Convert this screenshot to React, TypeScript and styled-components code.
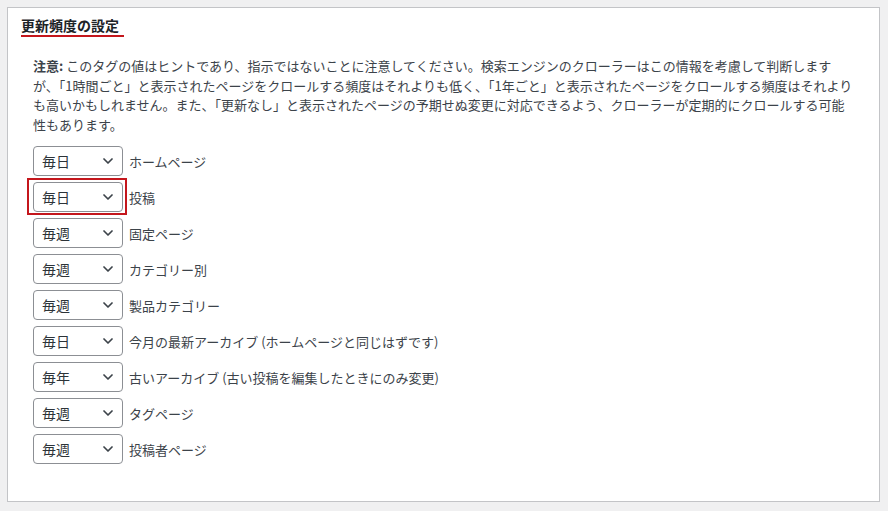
import React from 'react';
import styled, { createGlobalStyle } from 'styled-components';

const GlobalStyle = createGlobalStyle`
  html, body {
    margin: 0;
    padding: 0;
    background: #f0f0f1;
  }
  body {
    font-family: "Noto Sans CJK JP", "Noto Sans", sans-serif;
    color: #3c434a;
  }
`;

const Panel = styled.section`
  box-sizing: border-box;
  width: 873px;
  height: 495px;
  margin: 7px 0 0 7px;
  padding: 0 13px;
  background: #fff;
  border: 1px solid #c3c4c7;
`;

const Title = styled.h2`
  display: inline-block;
  margin: 8px 0 0;
  padding: 0 5px 0 0;
  font-size: 14px;
  line-height: 19px;
  font-weight: 700;
  color: #1d2327;
  border-bottom: 2px solid #c4161c;
`;

const Note = styled.p`
  width: 822px;
  margin: 19px 0 0 12px;
  font-size: 13px;
  line-height: 19.5px;
  color: #3c434a;

  strong {
    font-weight: 700;
  }
`;

const List = styled.div`
  display: flex;
  flex-direction: column;
  gap: 6px;
  margin: 12px 0 0 12px;
`;

const Row = styled.div`
  display: flex;
  align-items: center;
  gap: 6px;
`;

const SelectWrap = styled.span<{ $marked?: boolean }>`
  position: relative;
  display: inline-flex;

  &::after {
    content: '';
    display: ${p => (p.$marked ? 'block' : 'none')};
    position: absolute;
    left: -6px;
    right: -4px;
    top: -4px;
    bottom: -3px;
    border: 2px solid #c4161c;
    pointer-events: none;
  }
`;

const Select = styled.select`
  appearance: none;
  box-sizing: border-box;
  width: 90px;
  height: 30px;
  padding: 0 24px 0 8px;
  font-family: "Noto Sans CJK JP", sans-serif;
  font-size: 14px;
  color: #2c3338;
  background: #fff;
  border: 1px solid #8c8f94;
  border-radius: 4px;
  outline: none;
`;

const Chevron = styled.svg`
  position: absolute;
  right: 10px;
  top: 12px;
  pointer-events: none;
`;

const Label = styled.label`
  font-size: 13px;
  color: #3c434a;
`;

const rows: { value: string; label: string; marked?: boolean }[] = [
  { value: '毎日', label: 'ホームページ' },
  { value: '毎日', label: '投稿', marked: true },
  { value: '毎週', label: '固定ページ' },
  { value: '毎週', label: 'カテゴリー別' },
  { value: '毎週', label: '製品カテゴリー' },
  { value: '毎日', label: '今月の最新アーカイブ (ホームページと同じはずです)' },
  { value: '毎年', label: '古いアーカイブ (古い投稿を編集したときにのみ変更)' },
  { value: '毎週', label: 'タグページ' },
  { value: '毎週', label: '投稿者ページ' },
];

const options = ['常時', '1時間ごと', '毎日', '毎週', '毎月', '毎年', '更新なし'];

function App() {
  return (
    <>
      <GlobalStyle />
      <Panel>
        <Title>更新頻度の設定</Title>
        <Note>
          <strong>注意:</strong> このタグの値はヒントであり、指示ではないことに注意してください。検索エンジンのクローラーはこの情報を考慮して判断しますが、「1時間ごと」と表示されたページをクロールする頻度はそれよりも低く、「1年ごと」と表示されたページをクロールする頻度はそれよりも高いかもしれません。また、「更新なし」と表示されたページの予期せぬ変更に対応できるよう、クローラーが定期的にクロールする可能性もあります。
        </Note>
        <List>
          {rows.map((r, i) => (
            <Row key={i}>
              <SelectWrap $marked={r.marked}>
                <Select defaultValue={r.value} id={`freq-${i}`}>
                  {options.map(o => (
                    <option key={o} value={o}>{o}</option>
                  ))}
                </Select>
                <Chevron width="10" height="6" viewBox="0 0 10 6">
                  <path d="M1 1l4 4 4-4" fill="none" stroke="#3c434a" strokeWidth="1.7" strokeLinecap="round" strokeLinejoin="round" />
                </Chevron>
              </SelectWrap>
              <Label htmlFor={`freq-${i}`}>{r.label}</Label>
            </Row>
          ))}
        </List>
      </Panel>
    </>
  );
}

export default App;
